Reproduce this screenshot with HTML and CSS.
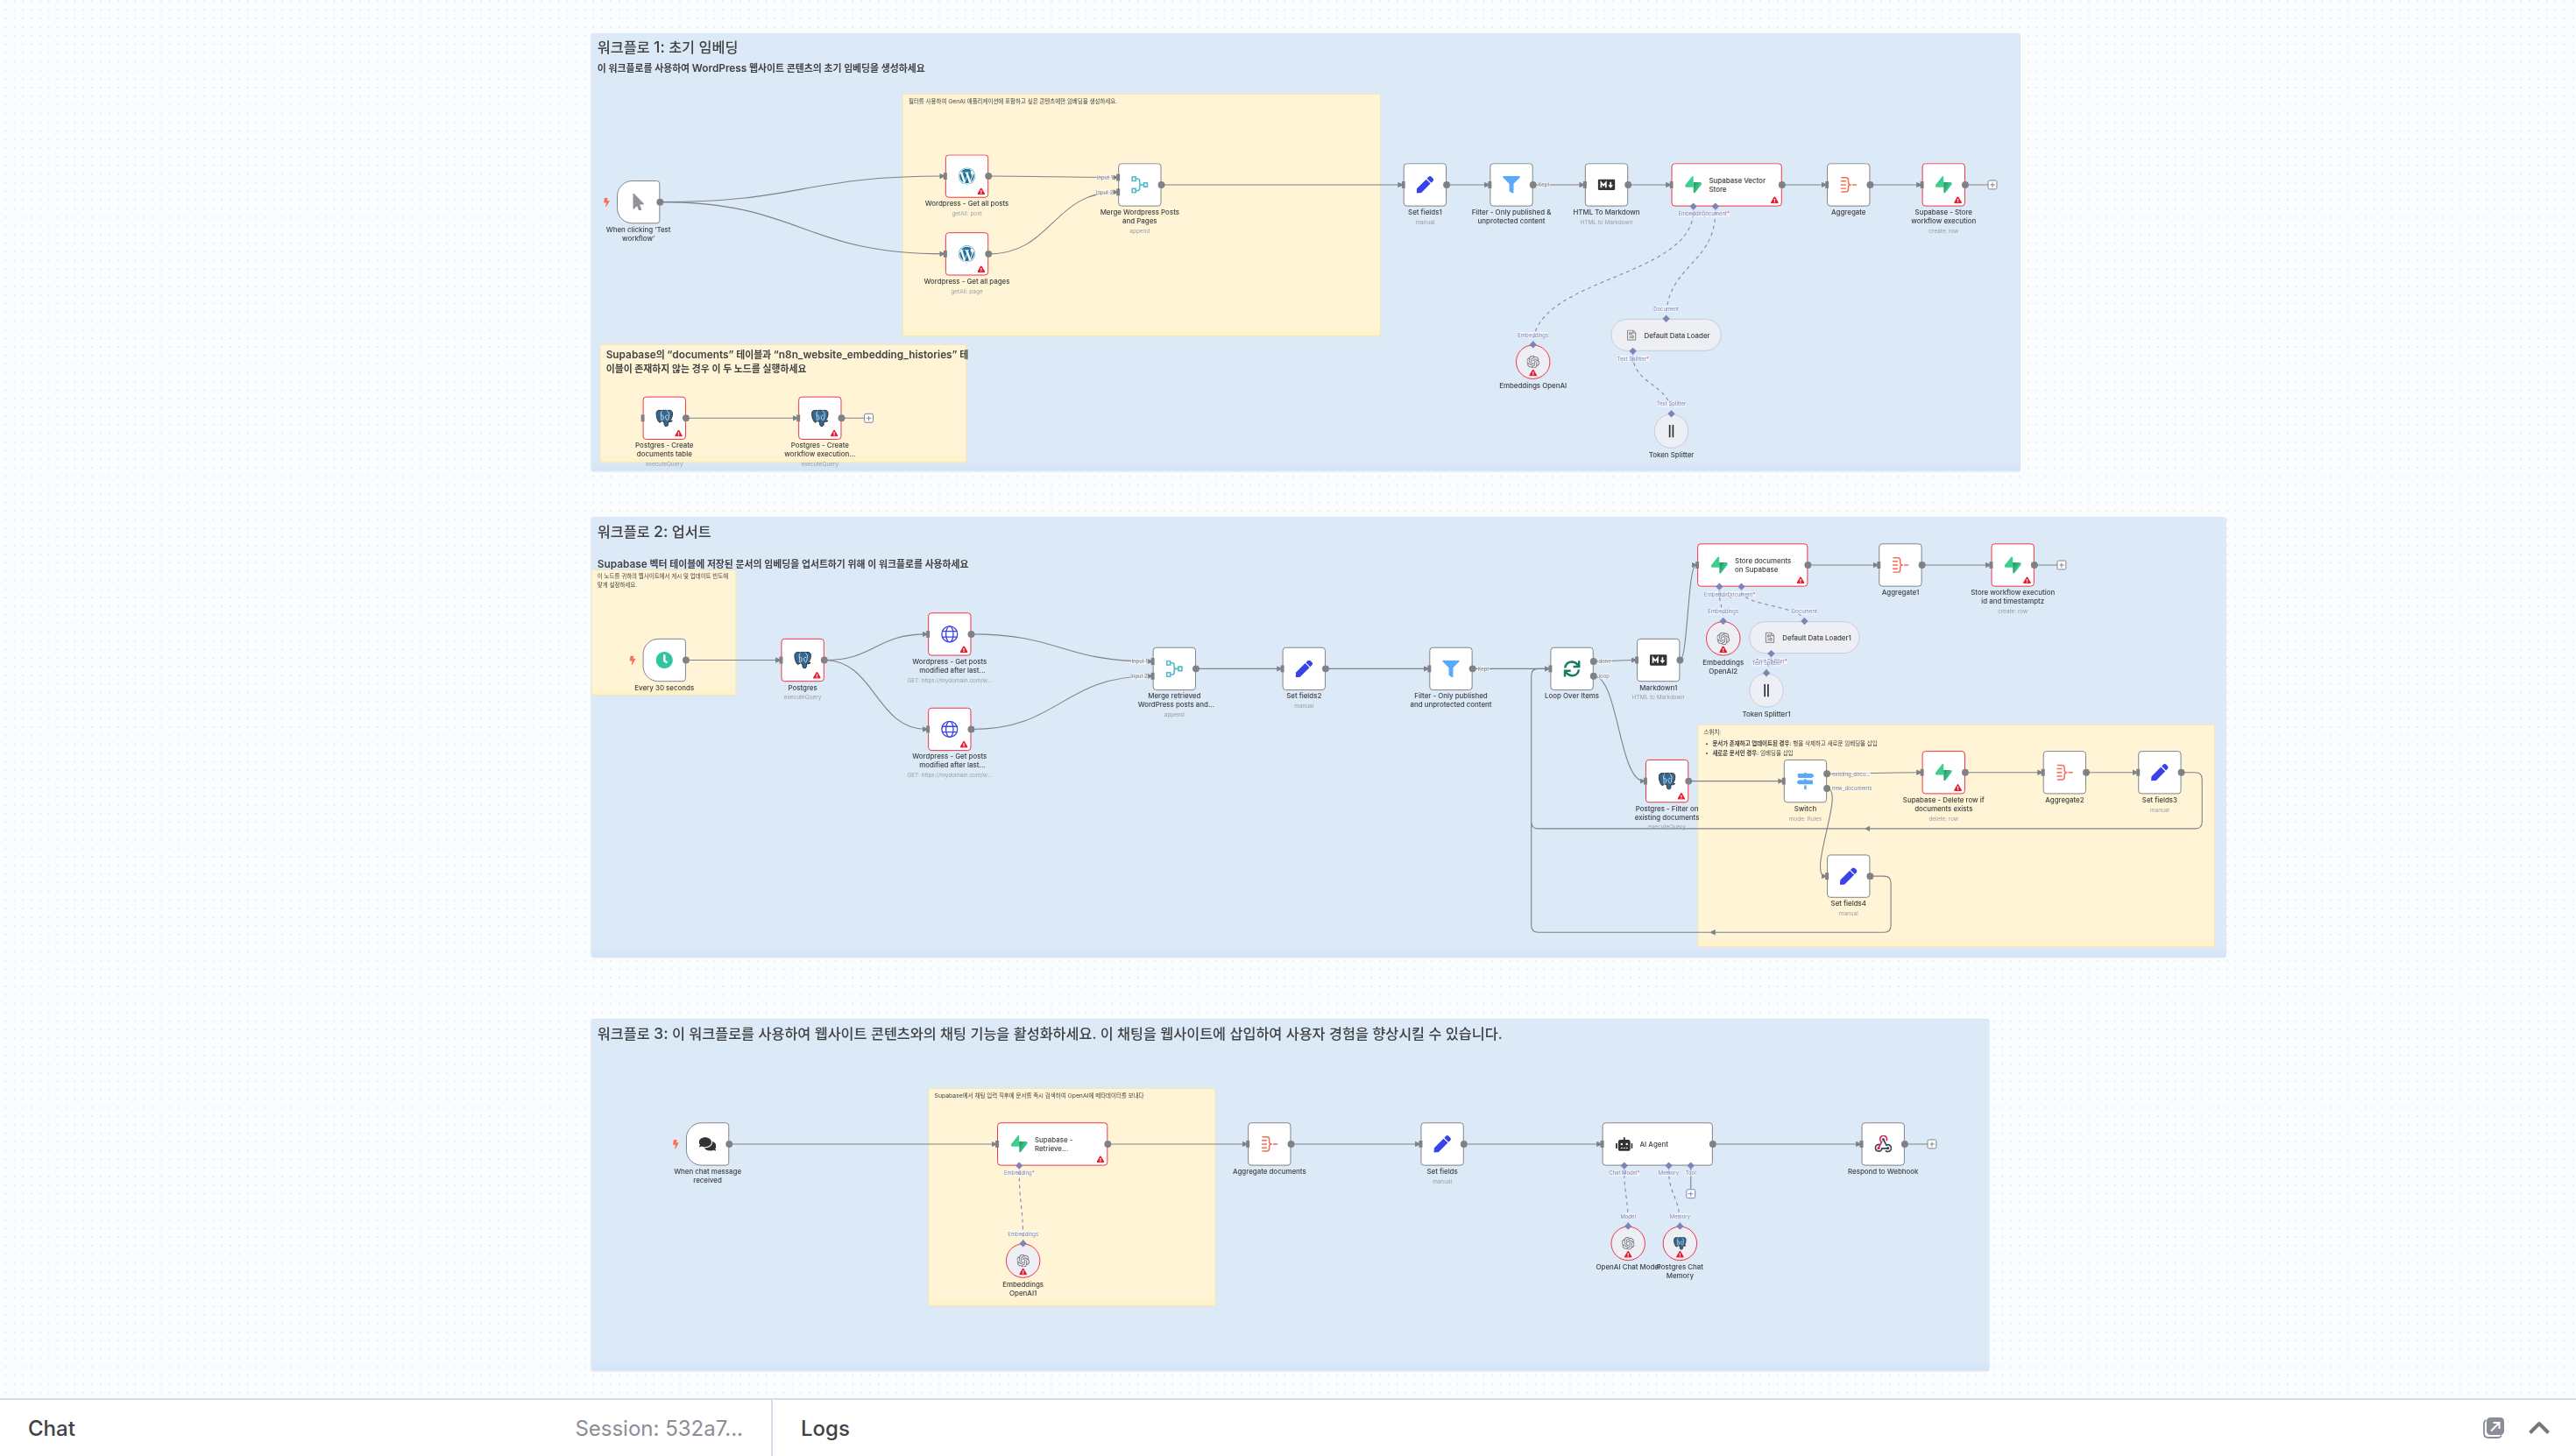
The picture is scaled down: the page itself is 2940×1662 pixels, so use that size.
FILE: index.html
```html
<!DOCTYPE html>
<html lang="ko">
<head>
<meta charset="utf-8">
<title>Workflow</title>
<link rel="stylesheet" href="styles.css">
</head>
<body>
<svg class="sprite" aria-hidden="true">
<symbol id="wp" viewBox="0 0 512 512"><path fill="#21759b" d="M61.7 169.4l101.5 278C92.2 413 43.3 340.2 43.3 256c0-30.9 6.6-60.1 18.4-86.6zm337.9 75.9c0-26.3-9.4-44.5-17.5-58.7-10.8-17.5-20.9-32.4-20.9-49.9 0-19.6 14.8-37.8 35.7-37.8.9 0 1.8.1 2.8.2-37.9-34.7-88.3-55.9-143.7-55.9-74.3 0-139.7 38.1-177.8 95.9 5 .2 9.7.3 13.7.3 22.2 0 56.7-2.7 56.7-2.7 11.5-.7 12.8 16.2 1.4 17.5 0 0-11.5 1.3-24.3 2l77.5 230.4L249.8 247l-33.1-90.8c-11.5-.7-22.3-2-22.3-2-11.5-.7-10.1-18.2 1.3-17.5 0 0 35.1 2.7 56 2.7 22.2 0 56.7-2.7 56.7-2.7 11.5-.7 12.8 16.2 1.4 17.5 0 0-11.5 1.3-24.3 2l76.9 228.7 21.2-70.9c9-29.4 16-50.5 16-68.7zm-139.9 29.3l-63.8 185.5c19.1 5.6 39.2 8.7 60.1 8.7 24.8 0 48.5-4.3 70.6-12.1-.6-.9-1.1-1.9-1.5-2.9l-65.4-179.2zm183-120.7c.9 6.8 1.4 14 1.4 21.9 0 21.6-4 45.8-16.2 76.2l-65 187.9C426.2 403 468.7 334.5 468.7 256c0-37-9.4-71.8-26-102.1zM504 256c0 136.8-111.3 248-248 248C119.2 504 8 392.7 8 256 8 119.2 119.2 8 256 8c136.7 0 248 111.2 248 248zm-11.4 0c0-130.5-106.2-236.6-236.6-236.6C125.5 19.4 19.4 125.5 19.4 256S125.6 492.6 256 492.6c130.5 0 236.6-106.1 236.6-236.6z"/></symbol>
<symbol id="pen" viewBox="0 0 512 512"><path fill="#3a42e9" d="M290.74 93.24l128.02 128.02-277.99 277.99-114.14 12.6C11.35 513.54-1.56 500.62.14 485.34l12.7-114.22 277.9-277.88zm207.2-19.06l-60.11-60.11c-18.75-18.75-49.16-18.75-67.91 0l-56.55 56.55 128.02 128.02 56.55-56.55c18.75-18.76 18.75-49.16 0-67.91z"/></symbol>
<symbol id="filter" viewBox="0 0 512 512"><path fill="#5aaaf9" d="M487.976 0H24.028C2.71 0-8.047 25.866 7.058 40.971L192 225.941V432c0 7.831 3.821 15.17 10.237 19.662l80 55.98C298.02 518.69 320 507.493 320 487.98V225.941l184.947-184.97C520.021 25.896 509.338 0 487.976 0z"/></symbol>
<symbol id="md" viewBox="0 0 40 40"><rect y="7.5" width="40" height="25" rx="3" fill="#333"/><path fill="none" stroke="#fff" stroke-width="3.6" d="M7.5 26.5V15l5.5 6.5 5.500-6.500V26.500M29.500 13.500V22"/><path fill="#fff" d="M23.500 20.500h12l-6 7z"/></symbol>
<symbol id="supa" viewBox="0 0 109 113"><linearGradient id="sg" x1="53.970" y1="54.970" x2="94.160" y2="71.830" gradientUnits="userSpaceOnUse"><stop stop-color="#249361"/><stop offset="1" stop-color="#3ecf8e"/></linearGradient><path fill="url(#sg)" d="M63.708 110.284C60.848 113.885 55.050 111.912 54.981 107.314L53.974 40.063H99.194C107.384 40.063 111.952 49.523 106.859 55.937Z"/><path fill="#3ecf8e" d="M45.317 2.071C48.177-1.530 53.975.443 54.043 5.041L54.485 72.292H9.831C1.640 72.292-2.928 62.832 2.166 56.418Z"/></symbol>
<symbol id="agg" viewBox="0 0 40 40"><path fill="none" stroke="#f76b57" stroke-width="3" stroke-linecap="round" stroke-linejoin="round" d="M4 3.500h9.500q6 0 6 5.500v5q0 6 5.500 6q-5.500 0-5.500 6v5q0 5.500-6 5.500H4M3 11.500h10M3 20h10M3 28.500h10M29.500 20H38"/></symbol>
<symbol id="merge" viewBox="0 0 40 40"><path fill="none" stroke="#54b8c9" stroke-width="3.200" d="M2.500 2h8v9h-8zM2.500 29h8v9h-8zM29.500 15.500h8v9h-8zM11 6.500h4.500q4 0 4 4v4.500q0 5 5 5q-5 0-5 5v4.500q0 4-4 4H11M24 20h5"/></symbol>
<symbol id="pg" viewBox="0 0 40 40"><path fill="#336791" stroke="#16191c" stroke-width="1.800" stroke-dasharray="4 .7" stroke-linejoin="round" d="M14 2.500C8 .5 1 1.500 1 10c0 6 3.500 17 7 19.500 2.500 1.500 4.500-1.500 6-3 .5 1.500 3.500 1.500 5 1 .5 3-.5 11 5 11.500 5 .2 5-4 5-11 3 1 7 .5 9.500-2-1.500-1-4 .5-5.500-.5C38 20 40 10 38.500 6 36.500 1 30 1 26 2c-4-1.200-8-1.500-12 .5z"/><path fill="none" stroke="#fff" stroke-width="1.500" d="M14 4C11 8 12 14 13 18c.6 3-1 5-.5 6.500.5 1.200 3 1 4.500-1 1.500-2.500 1-6.500 0-9-1-1.500-3-1.500-4.500-.8M26 3c4.500 3 6 8 4.500 12-1 3 0 6-1.500 9M22.500 15c0 4 1.500 9 5.500 11M24 13.500h4"/></symbol>
<symbol id="globe" viewBox="0 0 40 40"><g fill="none" stroke="#3a42e9" stroke-width="2.700"><circle cx="20" cy="20" r="18.200"/><ellipse cx="20" cy="20" rx="8.500" ry="18.200"/><path d="M3 13.500h34M3 26.500h34"/></g></symbol>
<symbol id="sync" viewBox="0 0 40 40"><path fill="none" stroke="#177a62" stroke-width="5" d="M4 18C5.500 9 12 4 20 4c6 0 10 2.500 14 7.500M36.500 1.500v13.500H23M36 22c-1.500 9-8 14-16 14-6 0-10-2.500-14-7.500M3.500 38.500V25H17"/></symbol>
<symbol id="cursor" viewBox="0 0 320 512"><path fill="#909298" d="M302.189 329.126H196.105l55.831 135.993c3.889 9.428-.555 19.999-9.444 23.999l-49.165 21.427c-9.165 4-19.443-.571-23.332-9.714l-53.053-129.136-86.664 89.138C18.729 472.710 0 463.554 0 447.977V18.299C0 1.899 19.921-6.096 30.277 5.443l284.412 292.542c11.472 11.179 3.007 31.141-12.500 31.141z"/></symbol>
<symbol id="clock" viewBox="0 0 512 512"><path fill="#31c4a0" d="M256,8C119,8,8,119,8,256S119,504,256,504,504,393,504,256,393,8,256,8Zm92.490,313h0l-20,25a16,16,0,0,1-22.490,2.500h0l-67-49.720a40,40,0,0,1-15-31.230V112a16,16,0,0,1,16-16h32a16,16,0,0,1,16,16V256l58,42.500A16,16,0,0,1,348.490,321Z"/></symbol>
<symbol id="comments" viewBox="0 0 576 512"><path fill="#333" d="M416 192c0-88.400-93.100-160-208-160S0 103.600 0 192c0 34.300 14.100 65.900 38 92-13.400 30.200-35.500 54.200-35.800 54.500-2.200 2.300-2.800 5.700-1.500 8.700S4.800 352 8 352c36.600 0 66.900-12.300 88.700-25 32.200 15.700 70.300 25 111.300 25 114.900 0 208-71.600 208-160zm122 220c23.900-26 38-57.700 38-92 0-66.900-53.500-124.200-129.300-148.100.9 6.600 1.300 13.300 1.300 20.100 0 105.900-107.700 192-240 192-10.800 0-21.300-.8-31.700-1.900C207.800 439.600 281.800 480 368 480c41 0 79.100-9.200 111.300-25 21.800 12.700 52.100 25 88.700 25 3.200 0 6.100-1.900 7.300-4.800 1.300-2.900.7-6.300-1.500-8.700-.3-.3-22.400-24.200-35.800-54.500z"/></symbol>
<symbol id="robot" viewBox="0 0 640 512"><path fill="#333" d="M32,224H64V416H32A32,32,0,0,1,0,384V256A32,32,0,0,1,32,224Zm512-48V448a64,64,0,0,1-64,64H160a64,64,0,0,1-64-64V176a80,80,0,0,1,80-80H288V32a32,32,0,0,1,64,0V96H464A80,80,0,0,1,544,176ZM264,256a40,40,0,1,0-40,40A40,40,0,0,0,264,256Zm-8,128H192v32h64Zm96,0H288v32h64ZM456,256a40,40,0,1,0-40,40A40,40,0,0,0,456,256Zm-8,128H384v32h64ZM640,256V384a32,32,0,0,1-32,32H576V224h32A32,32,0,0,1,640,256Z"/></symbol>
<symbol id="signs" viewBox="0 0 512 512"><path fill="#5aaaf9" d="M507.310 84.690L464 41.370c-6-6-14.140-9.370-22.630-9.370H288V16c0-8.840-7.160-16-16-16h-32c-8.840 0-16 7.160-16 16v16H56c-13.250 0-24 10.750-24 24v80c0 13.250 10.750 24 24 24h385.370c8.490 0 16.620-3.370 22.630-9.370l43.310-43.310c6.250-6.260 6.250-16.380 0-22.630zM224 496c0 8.840 7.160 16 16 16h32c8.840 0 16-7.160 16-16V384h-64v112zm232-272H288v-32h-64v32H70.630c-8.490 0-16.620 3.370-22.630 9.370L4.690 276.690c-6.250 6.250-6.250 16.380 0 22.630L48 342.630c6 6 14.140 9.370 22.630 9.370H456c13.250 0 24-10.750 24-24v-80c0-13.250-10.750-24-24-24z"/></symbol>
<symbol id="hook" viewBox="0 0 40 40"><g fill="none" stroke-width="3.400"><path stroke="#d6215c" d="M27.500 12.500A7.800 7.800 0 1 0 16.500 15L10 28"/><path stroke="#37474f" d="M12.500 21.500A7.800 7.800 0 1 0 17.500 30H31M21 10l6.500 12.500A7.800 7.800 0 1 1 25.500 35"/></g><circle cx="20.500" cy="9.500" r="3" fill="#37474f"/><circle cx="9.500" cy="29.500" r="3.200" fill="#d6215c"/><circle cx="31" cy="29.500" r="3.200" fill="#37474f"/></symbol>
<symbol id="openai" viewBox="0 0 24 24"><path fill="#77787d" d="M22.2819 9.8211a5.9847 5.9847 0 0 0-.5157-4.9108 6.0462 6.0462 0 0 0-6.5098-2.9A6.0651 6.0651 0 0 0 4.9807 4.1818a5.9847 5.9847 0 0 0-3.9977 2.9 6.0462 6.0462 0 0 0 .7427 7.0966 5.98 5.98 0 0 0 .511 4.9107 6.051 6.051 0 0 0 6.5146 2.9001A5.9847 5.9847 0 0 0 13.2599 24a6.0557 6.0557 0 0 0 5.7718-4.2058 5.9894 5.9894 0 0 0 3.9977-2.9001 6.0557 6.0557 0 0 0-.7475-7.0729zm-9.022 12.6081a4.4755 4.4755 0 0 1-2.8764-1.0408l.1419-.0804 4.7783-2.7582a.7948.7948 0 0 0 .3927-.6813v-6.7369l2.02 1.1686a.071.071 0 0 1 .038.052v5.5826a4.504 4.504 0 0 1-4.4945 4.4944zm-9.6607-4.1254a4.4708 4.4708 0 0 1-.5346-3.0137l.142.0852 4.783 2.7582a.7712.7712 0 0 0 .7806 0l5.8428-3.3685v2.3324a.0804.0804 0 0 1-.0332.0615L9.74 19.9502a4.4992 4.4992 0 0 1-6.1408-1.6464zM2.3408 7.8956a4.485 4.485 0 0 1 2.3655-1.9728V11.6a.7664.7664 0 0 0 .3879.6765l5.8144 3.3543-2.0201 1.1685a.0757.0757 0 0 1-.071 0l-4.8303-2.7865A4.504 4.504 0 0 1 2.3408 7.872zm16.5963 3.8558L13.1038 8.364 15.1192 7.2a.0757.0757 0 0 1 .071 0l4.8303 2.7913a4.4944 4.4944 0 0 1-.6765 8.1042v-5.6772a.79.79 0 0 0-.407-.667zm2.0107-3.0231l-.142-.0852-4.7735-2.7818a.7759.7759 0 0 0-.7854 0L9.409 9.2297V6.8974a.0662.0662 0 0 1 .0284-.0615l4.8303-2.7866a4.4992 4.4992 0 0 1 6.6802 4.66zM8.3065 12.863l-2.02-1.1638a.0804.0804 0 0 1-.038-.0567V6.0742a4.4992 4.4992 0 0 1 7.3757-3.4537l-.142.0805L8.704 5.459a.7948.7948 0 0 0-.3927.6813zm1.0976-2.3654l2.602-1.4998 2.6069 1.4998v2.9994l-2.5974 1.4997-2.6067-1.4997Z"/></symbol>
<symbol id="split" viewBox="0 0 30 30"><path stroke="#2e2f33" stroke-width="3.400" d="M11.200 0v30M18.800 0v30"/></symbol>
<symbol id="file" viewBox="0 0 24 28"><g fill="none" stroke="#77787d" stroke-width="2"><path d="M2 2h14l6 6v18H2zM15.500 2v6.500H22"/><path d="M6.500 7.500h3.500v4.500H6.500zM13 7v5.500M8 15.500V22M12 15.500h4.500V21H12z"/></g></symbol>
<symbol id="warn" viewBox="0 0 576 512"><path fill="#e91d30" d="M569.517 440.013C587.975 472.007 564.806 512 527.940 512H48.054c-36.937 0-59.999-40.055-41.577-71.987L246.423 23.985c18.467-32.009 64.720-31.951 83.154 0l239.940 416.028zM288 354c-25.405 0-46 20.595-46 46s20.595 46 46 46 46-20.595 46-46-20.595-46-46-46zm-43.673-165.346l7.418 136c.347 6.364 5.609 11.346 11.982 11.346h48.546c6.373 0 11.635-4.982 11.982-11.346l7.418-136c.375-6.874-5.098-12.654-11.982-12.654h-63.383c-6.884 0-12.356 5.780-11.981 12.654z"/></symbol>
<symbol id="bolt" viewBox="0 0 320 512"><path fill="#ff6d5a" d="M296 160H180.600l42.600-129.800C227.200 15 215.700 0 200 0H56C44 0 33.800 8.900 32.200 20.800l-32 240C-1.700 275.200 9.500 288 24 288h118.700L96.600 482.500c-3.600 15.200 8 29.500 23.300 29.500 8.400 0 16.400-4.400 20.800-12l176-304c9.300-15.900-2.200-36-20.700-36z"/></symbol>
</svg>

<main class="canvas">
<svg class="grid" width="100%" height="100%"><defs><pattern id="dots" x="1.570" y="-3.580" width="9.865" height="9.865" patternUnits="userSpaceOnUse"><circle cx="4.930" cy="4.930" r=".62" fill="#c3c7d1"/></pattern></defs><rect width="100%" height="100%" fill="url(#dots)"/></svg>
<div class="viewport">

<section class="sticky blue" style="left:-60px;top:-341px;width:3308px;height:1015px"><h1>워크플로 <b>1:</b> 초기 임베딩</h1><h2 class="s1">이 워크플로를 사용하여 <b>WordPress</b> 웹사이트 콘텐츠의 초기 임베딩을 생성하세요</h2></section>
<section class="sticky blue" style="left:-60px;top:779px;width:3785px;height:1020px"><h1>워크플로 <b>2:</b> 업서트</h1><h2 class="s2"><b>Supabase</b> 벡터 테이블에 저장된 문서의 임베딩을 업서트하기 위해 이 워크플로를 사용하세요</h2></section>
<section class="sticky blue" style="left:-60px;top:1940px;width:3236px;height:816px"><h1>워크플로 <b>3:</b> 이 워크플로를 사용하여 웹사이트 콘텐츠와의 채팅 기능을 활성화하세요. 이 채팅을 웹사이트에 삽입하여 사용자 경험을 향상시킬 수 있습니다.</h1></section>
<section class="sticky" style="left:660px;top:-201px;width:1108px;height:562px"><p>필터를 사용하여 <b>GenAI</b> 애플리케이션에 포함하고 싶은 콘텐츠에만 임베딩을 생성하세요.</p></section>
<section class="sticky" style="left:-40px;top:379px;width:850px;height:275px"><h2><b>Supabase</b>의 <b>“documents”</b> 테이블과 <b>“n8n_website_embedding_histories”</b> 테<br>이블이 존재하지 않는 경우 이 두 노드를 실행하세요</h2></section>
<section class="sticky" style="left:-60px;top:900px;width:337px;height:292px"><p class="up">이 노드를 귀하의 웹사이트에서 게시 및 업데이트 빈도에<br>맞게 설정하세요.</p></section>
<section class="sticky" style="left:2500px;top:1259px;width:1198px;height:516px"><p>스위치:</p><ul><li><strong>문서가 존재하고 업데이트된 경우:</strong> 행을 삭제하고 새로운 임베딩을 삽입</li><li><strong>새로운 문서인 경우:</strong> 임베딩을 삽입</li></ul></section>
<section class="sticky" style="left:720px;top:2100px;width:666px;height:506px"><p><b>Supabase</b>에서 채팅 입력 직후에 문서를 즉시 검색하여 <b>OpenAI</b>에 메타데이터를 보내다</p></section>

<svg class="edges" width="10" height="10">
<defs><marker id="ar" markerUnits="userSpaceOnUse" markerWidth="12" markerHeight="14" refX="10" refY="7" orient="auto"><path fill="#7f8186" d="M0 .5L10 5v4L0 13.500z"/></marker>
<marker id="aa" markerUnits="userSpaceOnUse" markerWidth="12" markerHeight="14" refX="10" refY="7" orient="auto"><path fill="#8083b7" d="M0 1.500L10 7 0 12.500z"/></marker></defs>
<g class="main" marker-end="url(#ar)">
<path d="M100,50C428,50 428,-10 757,-10"/><path d="M100,50C428,50 428,170 757,170"/>
<path d="M860,-10C1008,-10 1008,-7 1157,-7"/><path d="M860,170C1008,170 1008,27 1157,27"/>
<path d="M1260,10H1817"/><path d="M1920,10H2017"/><path d="M2120,10H2237"/><path d="M2340,10H2437"/><path d="M2696,10H2797"/><path d="M2900,10H3017"/>
<path d="M160,550H417"/>
<path d="M160,1110H377"/><path d="M480,1110C598,1110 598,1050 717,1050"/><path d="M480,1110C598,1110 598,1270 717,1270"/>
<path d="M820,1050C1028,1050 1028,1113 1237,1113"/><path d="M820,1270C1028,1270 1028,1147 1237,1147"/>
<path d="M1340,1130H1537"/><path d="M1640,1130H1877"/><path d="M1980,1130H2157"/>
<path d="M2260,1113C2308,1113 2308,1110 2357,1110"/><path d="M2260,1147C2318,1147 2318,1390 2377,1390"/>
<path d="M2460,1110C2478,1110 2478,890 2497,890"/><path d="M2756,890H2917"/><path d="M3020,890H3177"/>
<path d="M2480,1390H2697"/><path d="M2800,1373C2908,1373 2908,1370 3017,1370"/><path d="M2800,1407C2844,1407 2753,1610 2797,1610"/>
<path d="M3120,1370H3297"/><path d="M3400,1370H3517"/>
<path d="M3620,1370H3652Q3668,1370 3668,1386V1484Q3668,1500 3652,1500H2890"/>
<path d="M2900,1610H2932Q2948,1610 2948,1626V1724Q2948,1740 2932,1740H2532"/>
<path d="M260,2230H877"/><path d="M1136,2230H1457"/><path d="M1560,2230H1857"/><path d="M1960,2230H2277"/><path d="M2536,2230H2877"/>
</g>
<g class="main"><path d="M2895,1500H2132Q2116,1500 2116,1484V1146Q2116,1130 2132,1130H2150M2540,1740H2132Q2116,1740 2116,1724V1470"/>
<path d="M3120,10H3174M520,550H574M3280,890H3334M2980,2230H3034"/></g>
<g class="ai" marker-end="url(#aa)">
<path d="M2120,380C2120,225 2491,225 2491,70"/><path d="M2428,320C2428,195 2542,195 2542,70"/><path d="M2440,540C2440,472 2351,472 2351,405"/>
<path d="M2560,1020C2560,985 2551,985 2551,950"/><path d="M2748,1020C2748,985 2602,985 2602,950"/><path d="M2660,1140C2660,1122 2671,1122 2671,1105"/>
<path d="M940,2460C940,2370 931,2370 931,2290"/><path d="M2340,2420C2340,2350 2331,2350 2331,2290"/><path d="M2460,2420C2460,2350 2434,2350 2434,2290"/>
</g>
<path class="stub" d="M2485,2280V2334"/>
</svg>

<div class="node trigger" style="--x:0;--y:0"><svg class="bolt"><use href="#bolt"/></svg><svg class="ic"><use href="#cursor"/></svg><i class="out"></i><div class="lb">When clicking ‘Test<br>workflow’</div></div>
<div class="node err" style="--x:38;--y:-3"><i class="in"></i><svg class="ic"><use href="#wp"/></svg><svg class="wn"><use href="#warn"/></svg><i class="out"></i><div class="lb">Wordpress - Get all posts<small>getAll: post</small></div></div>
<div class="node err" style="--x:38;--y:6"><i class="in"></i><svg class="ic"><use href="#wp"/></svg><svg class="wn"><use href="#warn"/></svg><i class="out"></i><div class="lb">Wordpress - Get all pages<small>getAll: page</small></div></div>
<div class="node" style="--x:58;--y:-2"><i class="in a"></i><i class="in b"></i><span class="pl in1">Input 1</span><span class="pl in2">Input 2</span><svg class="ic"><use href="#merge"/></svg><i class="out"></i><div class="lb">Merge Wordpress Posts<br>and Pages<small>append</small></div></div>
<div class="node" style="--x:91;--y:-2"><i class="in"></i><svg class="ic"><use href="#pen"/></svg><i class="out"></i><div class="lb">Set fields1<small>manual</small></div></div>
<div class="node" style="--x:101;--y:-2"><i class="in"></i><svg class="ic"><use href="#filter"/></svg><i class="out"></i><span class="pl o">Kept</span><div class="lb">Filter - Only published &amp;<br>unprotected content</div></div>
<div class="node" style="--x:112;--y:-2"><i class="in"></i><svg class="ic"><use href="#md"/></svg><i class="out"></i><div class="lb">HTML To Markdown<small>HTML to Markdown</small></div></div>
<div class="node wide err" style="--x:122;--y:-2"><i class="in"></i><svg class="ic"><use href="#supa"/></svg><div class="tx">Supabase Vector<br>Store</div><svg class="wn"><use href="#warn"/></svg><i class="out"></i><i class="dia p1"></i><i class="dia p2"></i><span class="al p1">Embedding<em>*</em></span><span class="al p2">Document<em>*</em></span></div>
<div class="node" style="--x:140;--y:-2"><i class="in"></i><svg class="ic"><use href="#agg"/></svg><i class="out"></i><div class="lb">Aggregate</div></div>
<div class="node err" style="--x:151;--y:-2"><i class="in"></i><svg class="ic"><use href="#supa"/></svg><svg class="wn"><use href="#warn"/></svg><i class="out"></i><i class="plus"></i><div class="lb">Supabase - Store<br>workflow execution<small>create: row</small></div></div>
<div class="node round err" style="--x:104;--y:19"><svg class="ic"><use href="#openai"/></svg><svg class="wn"><use href="#warn"/></svg><i class="dia t"></i><span class="al t">Embeddings</span><div class="lb">Embeddings OpenAI</div></div>
<div class="node pill" style="--x:115;--y:16"><svg class="ic"><use href="#file"/></svg><div class="tx">Default Data Loader</div><i class="dia t"></i><span class="al t">Document</span><i class="dia p1"></i><span class="al p1">Text Splitter<em>*</em></span></div>
<div class="node round" style="--x:120;--y:27"><svg class="ic"><use href="#split"/></svg><i class="dia t"></i><span class="al t">Text Splitter</span><div class="lb">Token Splitter</div></div>
<div class="node err" style="--x:3;--y:25"><i class="in"></i><svg class="ic"><use href="#pg"/></svg><svg class="wn"><use href="#warn"/></svg><i class="out"></i><div class="lb">Postgres - Create<br>documents table<small>executeQuery</small></div></div>
<div class="node err" style="--x:21;--y:25"><i class="in"></i><svg class="ic"><use href="#pg"/></svg><svg class="wn"><use href="#warn"/></svg><i class="out"></i><i class="plus"></i><div class="lb">Postgres - Create<br>workflow execution...<small>executeQuery</small></div></div>

<div class="node trigger" style="--x:3;--y:53"><svg class="bolt"><use href="#bolt"/></svg><svg class="ic"><use href="#clock"/></svg><i class="out"></i><div class="lb">Every 30 seconds</div></div>
<div class="node err" style="--x:19;--y:53"><i class="in"></i><svg class="ic"><use href="#pg"/></svg><svg class="wn"><use href="#warn"/></svg><i class="out"></i><div class="lb">Postgres<small>executeQuery</small></div></div>
<div class="node err" style="--x:36;--y:50"><i class="in"></i><svg class="ic"><use href="#globe"/></svg><svg class="wn"><use href="#warn"/></svg><i class="out"></i><div class="lb">Wordpress - Get posts<br>&nbsp; &nbsp;modified after last...<small>GET: https://mydomain.com/w...</small></div></div>
<div class="node err" style="--x:36;--y:61"><i class="in"></i><svg class="ic"><use href="#globe"/></svg><svg class="wn"><use href="#warn"/></svg><i class="out"></i><div class="lb">Wordpress - Get posts<br>&nbsp; &nbsp;modified after last...<small>GET: https://mydomain.com/w...</small></div></div>
<div class="node" style="--x:62;--y:54"><i class="in a"></i><i class="in b"></i><span class="pl in1">Input 1</span><span class="pl in2">Input 2</span><svg class="ic"><use href="#merge"/></svg><i class="out"></i><div class="lb">Merge retrieved<br>&nbsp; WordPress posts and...<small>append</small></div></div>
<div class="node" style="--x:77;--y:54"><i class="in"></i><svg class="ic"><use href="#pen"/></svg><i class="out"></i><div class="lb">Set fields2<small>manual</small></div></div>
<div class="node" style="--x:94;--y:54"><i class="in"></i><svg class="ic"><use href="#filter"/></svg><i class="out"></i><span class="pl o">Kept</span><div class="lb">Filter - Only published<br>and unprotected content</div></div>
<div class="node" style="--x:108;--y:54"><i class="in"></i><svg class="ic"><use href="#sync"/></svg><i class="out a"></i><i class="out b"></i><span class="pl o o1">done</span><span class="pl o o2">loop</span><div class="lb">Loop Over Items</div></div>
<div class="node" style="--x:118;--y:53"><i class="in"></i><svg class="ic"><use href="#md"/></svg><i class="out"></i><div class="lb">Markdown1<small>HTML to Markdown</small></div></div>
<div class="node wide err" style="--x:125;--y:42"><i class="in"></i><svg class="ic"><use href="#supa"/></svg><div class="tx">Store documents<br>on Supabase</div><svg class="wn"><use href="#warn"/></svg><i class="out"></i><i class="dia p1"></i><i class="dia p2"></i><span class="al p1">Embedding<em>*</em></span><span class="al p2">Document<em>*</em></span></div>
<div class="node" style="--x:146;--y:42"><i class="in"></i><svg class="ic"><use href="#agg"/></svg><i class="out"></i><div class="lb">Aggregate1</div></div>
<div class="node err" style="--x:159;--y:42"><i class="in"></i><svg class="ic"><use href="#supa"/></svg><svg class="wn"><use href="#warn"/></svg><i class="out"></i><i class="plus"></i><div class="lb">Store workflow execution<br>id and timestamptz<small>create: row</small></div></div>
<div class="node round err" style="--x:126;--y:51"><svg class="ic"><use href="#openai"/></svg><svg class="wn"><use href="#warn"/></svg><i class="dia t"></i><span class="al t">Embeddings</span><div class="lb">Embeddings<br>OpenAI2</div></div>
<div class="node pill" style="--x:131;--y:51"><svg class="ic"><use href="#file"/></svg><div class="tx">Default Data Loader1</div><i class="dia t"></i><span class="al t">Document</span><i class="dia p1"></i><span class="al p1">Text Splitter<em>*</em></span></div>
<div class="node round" style="--x:131;--y:57"><svg class="ic"><use href="#split"/></svg><i class="dia t"></i><span class="al t">Text Splitter</span><div class="lb">Token Splitter1</div></div>
<div class="node err" style="--x:119;--y:67"><i class="in"></i><svg class="ic"><use href="#pg"/></svg><svg class="wn"><use href="#warn"/></svg><i class="out"></i><div class="lb">Postgres - Filter on<br>existing documents<small>executeQuery</small></div></div>
<div class="node" style="--x:135;--y:67"><i class="in"></i><svg class="ic"><use href="#signs"/></svg><i class="out a"></i><i class="out b"></i><span class="pl o o1">existing_docu...</span><span class="pl o o2">new_documents</span><div class="lb">Switch<small>mode: Rules</small></div></div>
<div class="node err" style="--x:151;--y:66"><i class="in"></i><svg class="ic"><use href="#supa"/></svg><svg class="wn"><use href="#warn"/></svg><i class="out"></i><div class="lb">Supabase - Delete row if<br>documents exists<small>delete: row</small></div></div>
<div class="node" style="--x:165;--y:66"><i class="in"></i><svg class="ic"><use href="#agg"/></svg><i class="out"></i><div class="lb">Aggregate2</div></div>
<div class="node" style="--x:176;--y:66"><i class="in"></i><svg class="ic"><use href="#pen"/></svg><i class="out"></i><div class="lb">Set fields3<small>manual</small></div></div>
<div class="node" style="--x:140;--y:78"><i class="in"></i><svg class="ic"><use href="#pen"/></svg><i class="out"></i><div class="lb">Set fields4<small>manual</small></div></div>

<div class="node trigger" style="--x:8;--y:109"><svg class="bolt"><use href="#bolt"/></svg><svg class="ic"><use href="#comments"/></svg><i class="out"></i><div class="lb">When chat message<br>received</div></div>
<div class="node wide err" style="--x:44;--y:109"><i class="in"></i><svg class="ic"><use href="#supa"/></svg><div class="tx">Supabase -<br>Retrieve...</div><svg class="wn"><use href="#warn"/></svg><i class="out"></i><i class="dia p1"></i><span class="al p1">Embedding<em>*</em></span></div>
<div class="node round err" style="--x:45;--y:123"><svg class="ic"><use href="#openai"/></svg><svg class="wn"><use href="#warn"/></svg><i class="dia t"></i><span class="al t">Embeddings</span><div class="lb">Embeddings<br>OpenAI1</div></div>
<div class="node" style="--x:73;--y:109"><i class="in"></i><svg class="ic"><use href="#agg"/></svg><i class="out"></i><div class="lb">Aggregate documents</div></div>
<div class="node" style="--x:93;--y:109"><i class="in"></i><svg class="ic"><use href="#pen"/></svg><i class="out"></i><div class="lb">Set fields<small>manual</small></div></div>
<div class="node wide" style="--x:114;--y:109"><i class="in"></i><svg class="ic"><use href="#robot"/></svg><div class="tx">AI Agent</div><i class="out"></i><i class="dia p1"></i><i class="dia p3"></i><i class="dia p4"></i><span class="al p1">Chat Model<em>*</em></span><span class="al p3">Memory</span><span class="al p4">Tool</span><i class="plus tool"></i></div>
<div class="node" style="--x:144;--y:109"><i class="in"></i><svg class="ic"><use href="#hook"/></svg><i class="out"></i><i class="plus"></i><div class="lb">Respond to Webhook</div></div>
<div class="node round err" style="--x:115;--y:121"><svg class="ic"><use href="#openai"/></svg><svg class="wn"><use href="#warn"/></svg><i class="dia t"></i><span class="al t">Model</span><div class="lb">OpenAI Chat Model</div></div>
<div class="node round err" style="--x:121;--y:121"><svg class="ic"><use href="#pg"/></svg><svg class="wn"><use href="#warn"/></svg><i class="dia t"></i><span class="al t">Memory</span><div class="lb">Postgres Chat<br>Memory</div></div>
</div>
</main>

<footer class="panel">
<div class="chat"><span>Chat</span><span class="session">Session: 532a7...</span></div>
<div class="logs"><span>Logs</span>
<div class="actions"><svg width="24" height="24" viewBox="0 0 24 24"><path fill="none" stroke="#8b8e97" stroke-width="1.800" d="M3.500 3.200Q1 4 1 7v11q0 5 5 5h10.500q3.500 0 4.300-2.500"/><rect x="4" y="0" width="20" height="20" rx="4.500" fill="#8b8e97"/><path fill="none" stroke="#fff" stroke-width="2" d="M9 15.500L18 6.500M11.500 6H18.500V13"/></svg>
<svg width="24" height="24" viewBox="0 0 24 24"><path fill="none" stroke="#74777e" stroke-width="4" stroke-linejoin="round" d="M1.500 17.500L12 7l10.500 10.500"/></svg></div></div>
</footer>
</body>
</html>
```
FILE: styles.css
```css
* { box-sizing: border-box; }
html, body { height: 100%; }
body {
  margin: 0;
  display: flex;
  flex-direction: column;
  overflow: hidden;
  background: #fff;
  color: #414244;
  font-family: Inter, "Noto Sans CJK KR", sans-serif;
}
.sprite { position: absolute; width: 0; height: 0; }

.canvas { position: relative; flex: 1; overflow: hidden; background: #fbfcfe; }
.grid { display: block; }

/* flow coordinates: one grid step is 20px, the viewport is zoomed out */
.viewport {
  position: absolute;
  left: 704px;
  top: 205.6px;
  width: 0;
  height: 0;
  transform: scale(.49325);
  transform-origin: 0 0;
}

.sticky {
  position: absolute;
  padding: 6px 13px;
  border: 2px solid #f6e6b4;
  border-radius: 6px;
  background: linear-gradient(#fff5d6 calc(100% - 24px), #fff1c9);
  white-space: nowrap;
}
.sticky.blue {
  border-color: #cfe0f6;
  background: linear-gradient(#dce9f7 calc(100% - 24px), #d3e4f7);
}
.sticky h1, .sticky h2, .sticky p, .sticky ul { margin: 0; }
.sticky h1 { font-size: 33px; font-weight: 500; line-height: 50px; }
.sticky h2 { font-size: 22px; font-weight: 600; line-height: 32px; }
.sticky b { font-weight: inherit; font-size: 1.09em; }
.sticky p, .sticky ul { font-size: 13.1px; line-height: 20px; }
.sticky p b { font-size: 1.06em; }
.sticky .s1 { margin-top: 7px; }
.sticky .s2 { margin-top: 35px; }
.sticky .up { margin-top: -2px; }
.sticky ul { padding-left: 20px; margin-top: 5px; }
.sticky li { line-height: 22px; padding-left: 0; }
.sticky strong { font-weight: 600; }

.edges { position: absolute; left: 0; top: 0; overflow: visible; }
.edges path { fill: none; }
.edges marker path { stroke: none; }
.edges marker#ar path { fill: #7f8186; }
.edges marker#aa path { fill: #8083b7; }
.main { stroke: #7f8186; stroke-width: 2.2; }
.ai { stroke: #8083b7; stroke-width: 2.2; stroke-dasharray: 8 8; }
.stub { stroke: #8083b7; stroke-width: 2.4; }

.node {
  position: absolute;
  left: calc(var(--x) * 20px);
  top: calc(var(--y) * 20px);
  width: 100px;
  height: 100px;
  border: 2.4px solid #7f8186;
  border-radius: 8px;
  background: #fff;
  display: flex;
  align-items: center;
  justify-content: center;
}
.node.err { border-color: #ee3144; }
.trigger { border-radius: 36px 8px 8px 36px; }
.ic { width: 40px; height: 40px; flex: none; }
.wide { width: 256px; justify-content: flex-start; padding-left: 29px; }
.wide .tx { margin-left: 16px; }
.tx { font-size: 16px; line-height: 20px; font-weight: 500; white-space: nowrap; }
.round, .pill { background: #eeeff5; border-color: #c6c9da; border-width: 2px; }
.round { width: 80px; height: 80px; border-radius: 50%; }
.round .ic { width: 30px; height: 30px; }
.pill { width: 256px; height: 75px; border-radius: 38px; justify-content: flex-start; padding-left: 33px; }
.pill .ic { width: 26px; height: 26px; }
.pill .tx { margin-left: 16px; }

.wn { position: absolute; right: 6px; bottom: 5px; width: 18px; height: 16px; }
.round .wn { right: auto; left: 29px; }
.bolt { position: absolute; left: -34px; top: 38px; width: 17px; height: 21px; }

.in, .out, .dia, .plus { position: absolute; background: #7f8186; }
.in { left: -6px; top: 40px; width: 8px; height: 16px; }
.out { right: -10px; top: 40px; width: 16px; height: 16px; border-radius: 50%; }
.a { top: 23px; }
.b { top: 57px; }
.dia { width: 12px; height: 12px; background: #8083b7; transform: rotate(45deg); bottom: -8px; margin-left: -8px; }
.p1 { left: 51.200px; }
.p2 { left: 102.400px; }
.p3 { left: 153.600px; }
.p4 { left: 204.800px; }
.dia.t { left: 50%; top: -8px; bottom: auto; margin-left: -6px; }

.lb {
  position: absolute;
  top: 101px;
  left: 50%;
  transform: translateX(-50%);
  text-align: center;
  white-space: nowrap;
  font-size: 16px;
  line-height: 20px;
  font-weight: 500;
}
.round .lb { top: 83px; }
.lb small { display: block; margin-top: 4px; font-size: 13px; line-height: 18px; font-weight: 400; color: #9b9da5; }

.pl, .al {
  position: absolute;
  font-size: 12px;
  line-height: 13px;
  white-space: nowrap;
  background: rgba(251, 252, 254, .65);
}
.pl { color: #7f8186; padding: 0 1px; }
.in1, .in2 { right: 109px; }
.in1 { top: 25px; }
.in2 { top: 59px; }
.o { left: 109px; top: 42px; }
.o1 { top: 25px; }
.o2 { top: 59px; }
.al { color: #8083b7; transform: translateX(-50%); bottom: -26px; margin-left: -2px; }
.al.t { left: 50%; bottom: auto; top: -31px; margin-left: 0; }
.al em { font-style: normal; color: #f0364a; }

.plus {
  left: 150px;
  top: 37px;
  width: 22px;
  height: 22px;
  border: 2.400px solid #7f8186;
  border-radius: 4px;
  background:
    linear-gradient(#7f8186, #7f8186) center / 11px 2px no-repeat,
    linear-gradient(#7f8186, #7f8186) center / 2px 11px no-repeat,
    #fff;
}
.plus.tool {
  left: 191.500px;
  top: 152px;
  border-color: #8083b7;
  background:
    linear-gradient(#8083b7, #8083b7) center / 11px 2px no-repeat,
    linear-gradient(#8083b7, #8083b7) center / 2px 11px no-repeat,
    #fff;
}

.panel {
  flex: none;
  display: flex;
  height: 66px;
  border-top: 2px solid #d9dce8;
  background: #fff;
  font-size: 24px;
  font-weight: 500;
}
.chat {
  display: flex;
  align-items: center;
  justify-content: space-between;
  width: 882px;
  padding: 0 32px;
  border-right: 2px solid #d9dce8;
}
.session { font-weight: 400; color: #8b8e97; }
.logs { flex: 1; display: flex; align-items: center; justify-content: space-between; padding: 0 30px 0 32px; }
.actions { display: flex; gap: 28px; }
```
